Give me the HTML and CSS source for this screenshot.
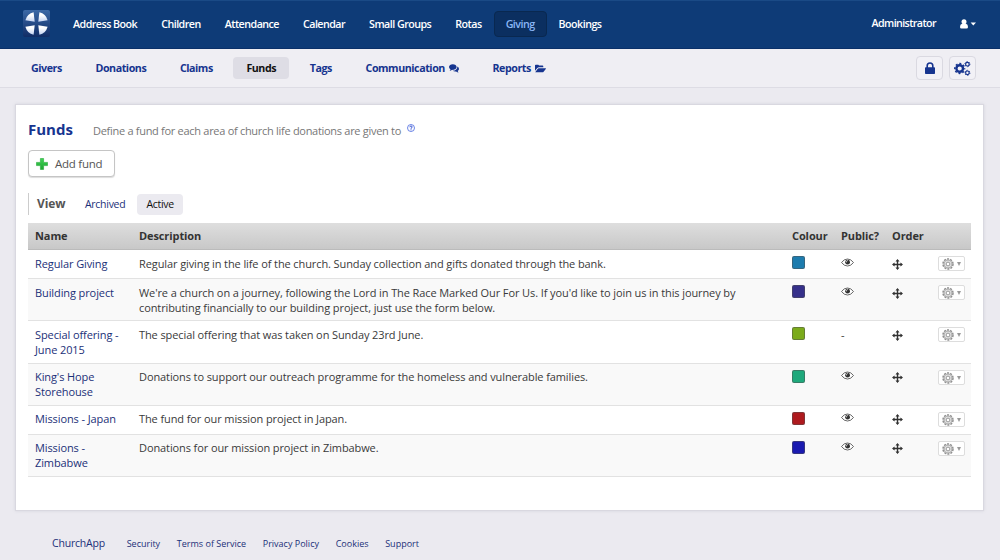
FILE: index.html
```html
<!DOCTYPE html>
<html lang="en">
<head>
<meta charset="utf-8">
<title>Funds - ChurchApp</title>
<link rel="stylesheet" href="styles.css">
</head>
<body>
<svg class="defs" width="0" height="0">
  <defs>
    <linearGradient id="logo-bg" x1="0" y1="0" x2="0" y2="1"><stop offset="0" stop-color="#3c69a6"/><stop offset="1" stop-color="#112d66"/></linearGradient>
    <linearGradient id="logo-fg" x1="0" y1="0" x2="0" y2="1"><stop offset="0.3" stop-color="#fff"/><stop offset="1" stop-color="#c3d3f3"/></linearGradient>
    <linearGradient id="plus-bg" x1="0" y1="0" x2="0" y2="1"><stop offset="0" stop-color="#3fd455"/><stop offset="1" stop-color="#1fa532"/></linearGradient>
    <symbol id="eye" viewBox="0 0 13 9"><path d="M.5 4.500Q3 1 6.500 1t6 3.500Q10 8 6.500 8T.5 4.500z" fill="#fff" stroke="#555" stroke-width=".9"/><circle cx="6.600" cy="4.200" r="2.400" fill="#333"/><path d="M6.800 2.400q-1.600.3-1.400 2" fill="none" stroke="#ddd" stroke-width=".8"/></symbol>
    <symbol id="move" viewBox="0 0 11 11"><path d="M5.500 1v9M1 5.500h9" stroke="#333" stroke-width="1.400"/><path d="M5.500 0l2 2.600h-4zM5.500 11l2-2.600h-4zM0 5.500l2.600-2v4zM11 5.500l-2.600-2v4z" fill="#333"/></symbol>
    <symbol id="gear" viewBox="0 0 12 12"><circle cx="6" cy="6" r="5" fill="#e2e2e2" stroke="#909090" stroke-width="1.500" stroke-dasharray="2 1.142"/><circle cx="6" cy="6" r="3.900" fill="#e6e6e6" stroke="#aaa" stroke-width=".9"/><circle cx="6" cy="6" r="1.900" fill="#fff" stroke="#8c8c8c" stroke-width=".9"/></symbol>
  </defs>
</svg>
<header class="topbar">
  <svg class="logo" viewBox="0 0 27 27"><rect width="27" height="27" rx="2" fill="url(#logo-bg)"/><g fill="url(#logo-fg)"><path d="M11.700 11.700L2.400 10.300Q4.200 3.600 10.600 2.300z"/><path d="M15.300 11.700l9.300-1.400Q22.800 3.600 16.400 2.300z"/><path d="M11.700 15.300L2.400 16.700Q4.200 23.400 10.600 24.700z"/><path d="M15.300 15.300l9.300 1.400Q22.800 23.400 16.400 24.700z"/></g></svg>
  <nav class="mainnav">
    <a>Address Book</a><a>Children</a><a>Attendance</a><a>Calendar</a><a>Small Groups</a><a>Rotas</a><a class="current">Giving</a><a>Bookings</a>
  </nav>
  <span class="admin">Administrator</span>
  <svg class="user" viewBox="0 0 16 10"><circle cx="4" cy="2.800" r="2.500" fill="#fff"/><path d="M2 4.800h4q2 .5 2 3.200 0 1.500-1.500 1.500h-5Q0 9.500 0 8q0-2.700 2-3.200zM10.600 3.500H16L13.300 6.500z" fill="#fff"/></svg>
</header>
<div class="subbar">
  <nav class="subnav">
    <a>Givers</a><a>Donations</a><a>Claims</a><a class="current">Funds</a><a>Tags</a>
    <a>Communication<svg class="comments" viewBox="0 0 10 9"><path d="M3.800.3C6 .3 7.600 1.500 7.600 3.100S6 5.900 3.800 5.900l-.7-.1Q2 6.800.6 6.900q.7-.6.9-1.500Q0 4.500 0 3.100C0 1.500 1.600.3 3.800.3z"/><path d="M8.400 2.500Q10 3.300 10 4.900q0 1.200-1.300 2 .2.900.9 1.500-1.500-.1-2.500-1-2 .3-3.400-.7 4.600-.1 4.700-4.200z"/></svg></a>
    <a>Reports<svg class="folder" viewBox="0 0 11 9"><path d="M0 6.700V1.500Q0 .7.800.7h2.300q.8 0 .8.900h3.600q.8 0 .8.800v.9H4q-1 0-1.700.8zM.2 8.300l2.400-3.400q.4-.7 1.200-.7h6.700q.8 0 .3.700L8.600 7.700q-.4.600-1.200.6z"/></svg></a>
  </nav>
  <span class="tool"><svg class="lock" viewBox="0 0 10 12"><path d="M2.200 6V3.800a2.800 2.800 0 0 1 5.600 0V6" fill="none" stroke="#16348f" stroke-width="1.600"/><rect y="5.300" width="10" height="6.700" rx=".8" fill="#16348f"/></svg></span>
  <span class="tool"><svg class="cogs" viewBox="0 0 17 15"><g fill="none" stroke="#16348f"><circle cx="5.700" cy="7.500" r="3.300" stroke-width="2.400"/><circle cx="5.700" cy="7.500" r="4.900" stroke-width="1.500" stroke-dasharray="1.950 1.898" stroke-dashoffset=".97"/><circle cx="13.400" cy="3.200" r="1.800" stroke-width="1.200"/><circle cx="13.400" cy="3.200" r="2.500" stroke-width="1" stroke-dasharray="1.300 1.318"/><circle cx="13.400" cy="11.800" r="1.800" stroke-width="1.200"/><circle cx="13.400" cy="11.800" r="2.500" stroke-width="1" stroke-dasharray="1.300 1.318"/></g></svg></span>
</div>
<main class="panel">
  <div class="heading">
    <h1>Funds</h1>
    <p>Define a fund for each area of church life donations are given to</p>
    <svg class="help" viewBox="0 0 8 8"><circle cx="4" cy="4" r="3.500" fill="#fff" stroke="#4767e0" stroke-width=".8"/><path d="M2.800 3.200q0-1.200 1.200-1.200t1.200 1Q5.200 3.800 4 4.200v.6M4 5.300v1" fill="none" stroke="#2c4bd0" stroke-width=".9"/></svg>
  </div>
  <button class="add"><svg viewBox="0 0 12 12"><path d="M4.400.5h3.200v3.900h3.900v3.200H7.600v3.900H4.400V7.600H.5V4.400h3.900z" fill="url(#plus-bg)" stroke="#23a837" stroke-width=".6"/></svg><span>Add fund</span></button>
  <div class="view"><b>View</b><a>Archived</a><a class="current">Active</a></div>
  <table class="funds">
    <colgroup><col class="c-name"><col class="c-desc"><col class="c-colour"><col class="c-public"><col class="c-order"><col></colgroup>
    <thead><tr><th>Name</th><th>Description</th><th>Colour</th><th>Public?</th><th>Order</th><th></th></tr></thead>
    <tbody>
      <tr><td><a>Regular Giving</a></td><td>Regular giving in the life of the church. Sunday collection and gifts donated through the bank.</td><td><i class="swatch teal"></i></td><td><svg class="eye"><use href="#eye"/></svg></td><td><svg class="move"><use href="#move"/></svg></td><td><span class="menu"><svg><use href="#gear"/></svg><i></i></span></td></tr>
      <tr class="tall"><td><a>Building project</a></td><td>We're a church on a journey, following the Lord in The Race Marked Our For Us. If you'd like to join us in this journey by contributing financially to our building project, just use the form below.</td><td><i class="swatch indigo"></i></td><td><svg class="eye"><use href="#eye"/></svg></td><td><svg class="move"><use href="#move"/></svg></td><td><span class="menu"><svg><use href="#gear"/></svg><i></i></span></td></tr>
      <tr class="tall extra"><td><a>Special offering - June 2015</a></td><td>The special offering that was taken on Sunday 23rd June.</td><td><i class="swatch lime"></i></td><td>-</td><td><svg class="move"><use href="#move"/></svg></td><td><span class="menu"><svg><use href="#gear"/></svg><i></i></span></td></tr>
      <tr class="tall snug"><td><a>King's Hope Storehouse</a></td><td>Donations to support our outreach programme for the homeless and vulnerable families.</td><td><i class="swatch green"></i></td><td><svg class="eye"><use href="#eye"/></svg></td><td><svg class="move"><use href="#move"/></svg></td><td><span class="menu"><svg><use href="#gear"/></svg><i></i></span></td></tr>
      <tr class="snug"><td><a>Missions - Japan</a></td><td>The fund for our mission project in Japan.</td><td><i class="swatch red"></i></td><td><svg class="eye"><use href="#eye"/></svg></td><td><svg class="move"><use href="#move"/></svg></td><td><span class="menu"><svg><use href="#gear"/></svg><i></i></span></td></tr>
      <tr class="tall snug"><td><a>Missions - Zimbabwe</a></td><td>Donations for our mission project in Zimbabwe.</td><td><i class="swatch blue"></i></td><td><svg class="eye"><use href="#eye"/></svg></td><td><svg class="move"><use href="#move"/></svg></td><td><span class="menu"><svg><use href="#gear"/></svg><i></i></span></td></tr>
    </tbody>
  </table>
</main>
<footer class="footer"><a class="brand">ChurchApp</a><a>Security</a><a>Terms of Service</a><a>Privacy Policy</a><a>Cookies</a><a>Support</a></footer>
</body>
</html>
```
FILE: styles.css
```css
* { box-sizing: border-box; }
body { margin: 0; height: 560px; overflow: hidden; background: #ebeaf0; font: 11px/15px "Open Sans", sans-serif; letter-spacing: -.1px; color: #3a3a3a; }
.defs { display: block; height: 0; }
svg { display: block; flex: none; }
a, span, b { white-space: nowrap; }

.topbar { height: 49px; padding: 0 24px 2px 23px; display: flex; align-items: center; background: #0e3b77; border-top: 1px solid #1a4a86; border-bottom: 1px solid #0a3069; color: #fff; font-size: 10.700px; font-weight: 600; letter-spacing: -.53px; }
.logo { width: 27px; height: 27px; }
.mainnav { display: flex; flex: 1; margin-left: 11px; }
.mainnav a { height: 26px; line-height: 24px; padding: 0 11px; border: 1px solid transparent; border-radius: 4px; }
.mainnav .current { background: #0b2f60; border-color: #092850; color: #8ab6f5; }
.admin { margin-right: 24px; letter-spacing: -.6px; }
.user { width: 16px; height: 10px; }

.subbar { height: 39px; padding: 0 24px 0 18px; display: flex; align-items: center; background: #efeef3; border-bottom: 1px solid #dddce4; }
.subnav { display: flex; flex: 1; gap: 7.600px; font-size: 10.700px; letter-spacing: -.45px; }
.subnav a { display: flex; align-items: center; height: 22px; padding: 0 13px; color: #16348f; font-weight: 700; border-radius: 4px; }
.subnav .current { background: #dedde5; color: #111; }
.subnav svg { fill: #16348f; margin-left: 4px; }
.comments { width: 10px; height: 9px; }
.folder { width: 11px; height: 9px; }
.tool { width: 27px; height: 24px; margin-left: 6px; border: 1px solid #dad9e1; border-radius: 4px; background: #f2f1f6; display: flex; align-items: center; justify-content: center; }
.lock { width: 10px; height: 12px; }
.cogs { width: 17px; height: 15px; }

.panel { width: 969px; height: 407px; margin: 16px 0 0 15px; padding: 12px 12px 0; background: #fff; border: 1px solid #d9d8e0; box-shadow: 0 0 3px #d5d4dd; }
.heading { display: flex; height: 24px; align-items: center; }
h1 { margin: 0; width: 65px; font-size: 15px; line-height: 20px; letter-spacing: 0; color: #16348f; }
.heading p { margin: 2px 6px 0 0; letter-spacing: -.29px; color: #777; }
.help { width: 8px; height: 8px; margin-bottom: 2px; }
.add { display: flex; align-items: center; width: 87px; height: 27px; margin-top: 9px; padding: 0 8px 0 7px; border: 1px solid #c5c5c5; border-radius: 4px; background: #fff; box-shadow: 0 1px 1px #ddd; font: 11.500px "Open Sans", sans-serif; letter-spacing: -.25px; color: #555; }
.add svg { width: 12px; height: 12px; margin-right: 7px; }
.view { display: flex; align-items: center; height: 22px; margin-top: 16px; padding-left: 8px; border-left: 1px solid #ccc; }
.view b { width: 39px; margin-top: -1px; font-size: 12px; color: #555; }
.view a { height: 21px; line-height: 21px; padding: 0 9px; margin-right: 3px; border-radius: 4px; font-size: 10.500px; letter-spacing: -.28px; color: #1b3078; }
.view .current { background: #ebeaf0; color: #111; }

.funds { width: 943px; margin-top: 8px; border-collapse: separate; border-spacing: 0; table-layout: fixed; }
.c-name { width: 104px; }
.c-desc { width: 653px; }
.c-colour { width: 49px; }
.c-public { width: 51px; }
.c-order { width: 46px; }
th { height: 27px; padding: 0 0 1px 7px; text-align: left; font-size: 11px; background: linear-gradient(#dedede, #c8c8c8); border-bottom: 1px solid #bbb; color: #333; }
td { height: 29px; padding: 6px 0 0 7px; vertical-align: top; border-bottom: 1px solid #e2e2e2; }
td:nth-child(2) { padding-right: 40px; }
td:nth-child(1) { padding-right: 8px; }
td a { white-space: normal; color: #1b3078; }
.tall td { height: 42px; }
.extra td { height: 43px; }
.snug td { padding-top: 5px; }
.snug .swatch, .snug .menu { margin-top: 1px; }
tbody tr:nth-child(even) td { background: #f9f9f9; }
.swatch { display: block; width: 13px; height: 13px; border: 1px solid rgba(80,80,80,.5); border-radius: 2px; }
.teal { background: #1d7cae; }
.indigo { background: #36308a; }
.lime { background: #7bab1b; }
.green { background: #1fa97c; }
.red { background: #ae1a1e; }
.blue { background: #1a1ab0; }
.eye { width: 13px; height: 9px; margin-top: 2px; }
.move { width: 11px; height: 11px; margin-top: 3px; }
.menu { display: flex; align-items: center; width: 27px; height: 15px; padding-left: 3px; border: 1px solid #ddd; border-radius: 2px; background: #fff; }
.menu svg { width: 12px; height: 12px; }
.menu i { margin-left: 3px; border: 2px solid transparent; border-top: 4px solid #999; border-bottom: 0; }

.footer { display: flex; align-items: center; margin: 25px 0 0 52px; font-size: 9px; letter-spacing: 0; gap: 16.700px; color: #1b3078; }
.brand { font-size: 10.500px; letter-spacing: -.2px; margin-right: 5px; }
```
